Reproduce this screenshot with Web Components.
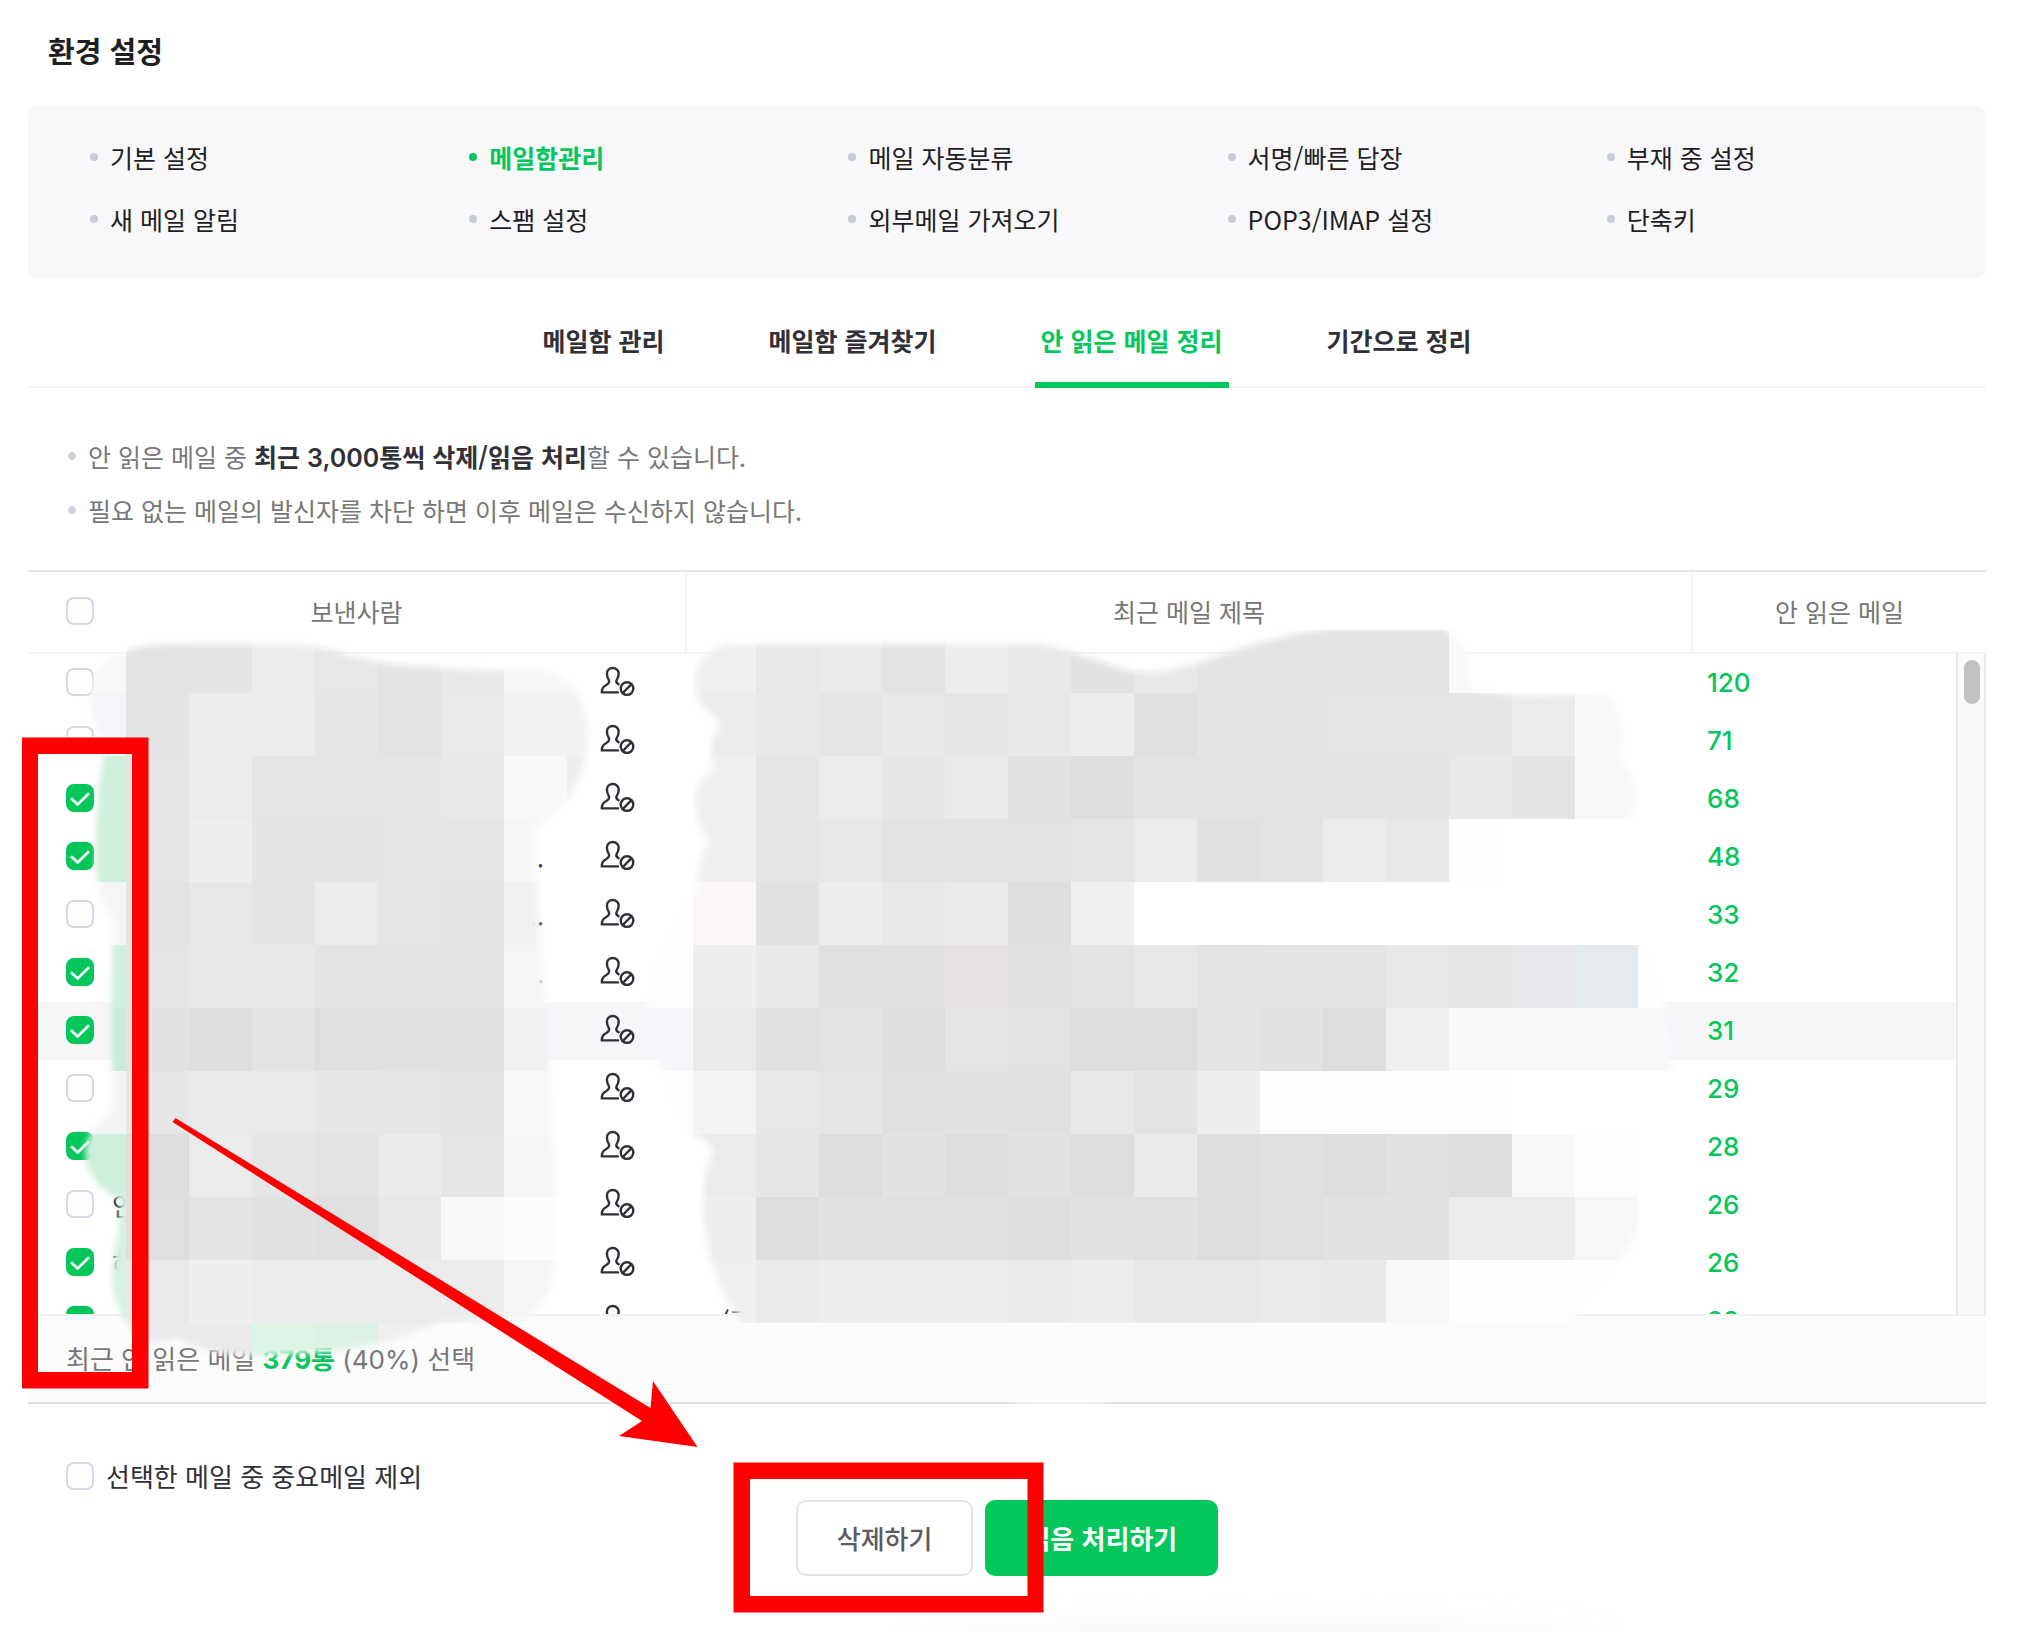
<!DOCTYPE html>
<html lang="ko">
<head>
<meta charset="utf-8">
<title>환경 설정</title>
<style>
  body { margin: 0; background: #fff; }
</style>
</head>
<body>
<settings-page></settings-page>
<script>
const define = (name, html, setup) => customElements.define(name, class extends HTMLElement {
  connectedCallback() {
    if (this.shadowRoot) return;
    const root = this.attachShadow({ mode: 'open' });
    const t = document.createElement('template');
    t.innerHTML = typeof html === 'function' ? html(this) : html;
    root.append(t.content.cloneNode(true));
    if (setup) setup(this, root);
  }
});

/* Tick box with an optional slotted label */
define('check-box', el => `
<style>
  :host { display: inline-flex; }
  label { display: flex; align-items: center; gap: 12px; line-height: 28px; }
  .box { display: grid; flex: none; }
  input, svg { grid-area: 1 / 1; width: 28px; height: 28px; margin: 0; box-sizing: border-box; }
  input { appearance: none; border: 2px solid #d3d6e8; border-radius: 8px; background: #fff; }
  input:checked { border-color: #03c75a; background: #03c75a; }
  svg { pointer-events: none; visibility: hidden; }
  input:checked + svg { visibility: visible; }
</style>
<label><span class="box"><input type="checkbox" ${el.hasAttribute('checked') ? 'checked' : ''} ${el.hasAttribute('name') ? `aria-label="${el.getAttribute('name')}"` : ''}>
<svg viewBox="0 0 28 28" fill="none" stroke="#fff" stroke-width="2.7"><path d="M5 14.2 11.7 20.4 23 9.200"/></svg></span><slot></slot></label>`);

/* Person with a "blocked" badge */
define('block-icon', `
<style>:host { display: block; width: 36px; height: 32px; } svg { display: block; }</style>
<svg width="36" height="32" viewBox="0 0 36 32" fill="none" stroke="#2f2f37" stroke-width="2.4" stroke-linecap="round" stroke-linejoin="round">
<path d="M18.6 18.2C16.4 17.2 15.9 16.2 16.5 14.4 17.8 12.4 18.7 10.4 18.7 7.8 18.7 4.4 16.2 2 12.8 2S6.9 4.4 6.9 7.8C6.9 10.4 7.8 12.4 9 14.4 9.7 17 8.3 18 5.6 19.5 2.8 21 1.7 22.8 1.8 26.4H18"/>
<circle cx="27" cy="22.6" r="6.3"/><path d="M22.8 27 31.2 18.3"/></svg>`);

define('settings-nav', `
<style>
  :host { display: block; font-size: 25px; }
  ul { list-style: none; margin: 0; padding: 20px 0 28px 62px; background: #f8f8fb; border-radius: 10px;
       display: grid; grid-template-columns: repeat(5, 1fr); }
  li, a { display: flex; align-items: center; }
  li { height: 62px; }
  a { gap: 12px; color: #1e1e23; text-decoration: none; white-space: nowrap; }
  a::before { content: ""; width: 8px; height: 8px; border-radius: 50%; background: #c8ccd6; }
  a[aria-current] { color: #03c75a; font-weight: 700; }
  a[aria-current]::before { background: #03c75a; }
</style>
<nav><ul></ul></nav>`, (el, root) => {
  const items = ['기본 설정', '메일함관리', '메일 자동분류', '서명/빠른 답장', '부재 중 설정',
    '새 메일 알림', '스팸 설정', '외부메일 가져오기', 'POP3/IMAP 설정', '단축키'];
  root.querySelector('ul').innerHTML = items.map((t, i) =>
    `<li><a href="#"${i === 1 ? ' aria-current="page"' : ''}>${t}</a></li>`).join('');
});

define('mailbox-tabs', `
<style>
  :host { display: block; font-size: 25px; }
  nav { display: flex; justify-content: center; gap: 92px; border-bottom: 2px solid #f4f4f6; }
  a { padding: 44px 6px 24px; margin-bottom: -2px; border-bottom: 6px solid transparent; line-height: 36px;
      font-weight: 700; color: #303038; text-decoration: none; }
  a[aria-current] { color: #03c75a; border-color: #03c75a; }
</style>
<nav><a href="#">메일함 관리</a><a href="#">메일함 즐겨찾기</a><a href="#" aria-current="page">안 읽은 메일 정리</a><a href="#">기간으로 정리</a></nav>`);

define('notice-list', `
<style>
  :host { display: block; padding: 41px 0 33px 40px; font-size: 25px; }
  ul { list-style: none; margin: 0; padding: 0; color: #777; }
  li { display: flex; align-items: center; gap: 12px; height: 54px; }
  li::before { content: ""; width: 8px; height: 8px; border-radius: 50%; background: #cfd3db; }
  strong { color: #303038; font-weight: 700; }
  .num { font-family: Inter, sans-serif; font-weight: 600; }
</style>
<ul><li><span>안 읽은 메일 중 <strong>최근 <span class="num">3,000</span>통씩 삭제/읽음 처리</strong>할 수 있습니다.</span></li>
<li><span>필요 없는 메일의 발신자를 차단 하면 이후 메일은 수신하지 않습니다.</span></li></ul>`);

define('unread-table', `
<style>
  :host { display: block; border-top: 2px solid #e4e4ea; border-bottom: 2px solid #e0e0e0; }
  table, thead, tbody { display: block; }
  tr { display: grid; grid-template-columns: 659px 1fr var(--count); }
  th, td { padding: 0; box-sizing: border-box; display: flex; align-items: center; min-width: 0; }
  thead { --count: 293px; border-bottom: 2px solid #f4f4f6; }
  th { height: 80px; justify-content: center; padding-bottom: 2px; font-size: 25px; font-weight: 400; color: #777; border-right: 2px solid #f4f4f6; }
  th:last-child { border: 0; }
  th:first-child { display: grid; grid-template-columns: 28px 1fr 28px; padding: 0 38px 2px; justify-items: center; }
  .view { display: grid; grid-template-columns: 1fr 30px; height: 660px; overflow: hidden; }
  tbody { --count: 263px; min-width: 0; }
  tbody tr { height: 58px; }
  tr.on { background: #f6f6f9; }
  .from { padding: 0 51px 2px 38px; gap: 18px; color: #303038; }
  .from .name { flex: 1; display: flex; justify-content: space-between; padding-right: 38px; }
  button { border: 0; padding: 0; background: none; }
  .title { padding: 0 34px 2px; color: #303038; }
  .count { padding: 0 0 2px 14px; font: 500 26px Inter, sans-serif; color: #03c75a; }
  .track { background: #fafafa; border: solid #e8e8ea; border-width: 0 2px; padding: 6px; }
  .thumb { width: 16px; height: 44px; border-radius: 8px; background: #c1c1c1; }
  .sum { display: flex; align-items: center; height: 88px; box-sizing: border-box; padding: 0 38px 4px;
         background: #fcfcfc; border-top: 2px solid #f2f2f4; color: #777; }
  .sum b { color: #03c75a; }
  .num { font-family: Inter, sans-serif; }
</style>
<table><thead><tr><th scope="col"><check-box name="전체 선택"></check-box><span>보낸사람</span></th><th scope="col">최근 메일 제목</th><th scope="col">안 읽은 메일</th></tr></thead></table>
<div class="view"><table><tbody></tbody></table><div class="track"><div class="thumb"></div></div></div>
<div class="sum"><span>최근 안 읽은 메일 <b><span class="num">379</span>통</b> <span class="num">(40%)</span> 선택</span></div>`, (el, root) => {
  const rows = [[120, 0], [71, 0], [68, 1], [48, 1, '', '.'], [33, 0, '', '..'], [32, 1, '', '.'], [31, 1], [29, 0, '', '.'],
    [28, 1, '', '', '('], [26, 0, '안', '', '['], [26, 1, '하', '', '('], [23, 1, '', '', '(광']];
  root.querySelector('tbody').innerHTML = rows.map(([n, on, a = '', b = '', t = '']) => `
    <tr${n === 31 ? ' class="on"' : ''}><td class="from"><check-box name="선택"${on ? ' checked' : ''}></check-box>
    <span class="name"><span>${a}</span><span>${b}</span></span>
    <button type="button" aria-label="수신차단"><block-icon></block-icon></button></td>
    <td class="title">${t}</td><td class="count">${n}</td></tr>`).join('');
});

/* Push button; "primary" gives the filled look */
define('push-button', `
<style>
  :host { display: block; }
  button { height: 76px; padding: 0 39px 2px; border: 2px solid #e4e4ea; border-radius: 10px; background: #fff;
           font: inherit; font-weight: 500; color: #5b5b63; }
  :host([primary]) button { background: #03c75a; border-color: #03c75a; color: #fff; font-weight: 700; }
</style>
<button type="button"><slot></slot></button>`);

/* Mosaic that hides names and titles, on a 63px grid */
const GRID = 63;
const GREEN = 'cdefdc', V = 'e2e2e5', D = 'dedee0', W = 'ffffff';
const LEFT = [
  ['f8', 'e3e3e5', 'e4', 'eb', 'e7', 'e4', 'e8', 'f6', 'f3'],
  ['f4f5f8', 'e4', 'ec', 'eb', 'e6', 'e3e3e6', 'e9', 'f2', 'f2'],
  [GREEN, 'e5', 'ec', 'e5', 'e5', 'e5', 'e8', 'f8', 'ee'],
  [GREEN, 'e5', 'ee', 'e4', 'e4', 'e5', 'e6', 'f6', 'f6'],
  ['f5', 'e3', 'e7', 'e4', 'eb', 'e5', 'e4', 'f1', 'f1'],
  [GREEN, 'e5', 'e8', 'e8', 'e4', 'e4', 'e4', 'f5', 'f5'],
  ['c9ebd8', 'e2', D, 'e4', 'dfdfe1', 'e1e1e3', 'e2e2e4', 'f1f1f4', 'f4f5f8'],
  ['f4', 'e6', 'e9', 'e9', 'e6', 'e6', 'e4', 'f8', 'f8'],
  [GREEN, D, 'eb', 'e6', 'e3', 'ea', 'e5', 'f6', 'f6'],
  ['d4f1e1', 'dfdfe1', 'e4', V, 'e0e0e3', 'e7', 'f8', 'fc', 'fc'],
  ['d4f1e1', 'e9', 'ee', 'eb', 'ec', 'eb', 'ec', 'f5', 'f5'],
  ['f2', 'ea', 'ea', 'dcf4e6', 'dcf1e5', 'ef', 'f3', 'f7', 'f7']
];
const RIGHT = [
  [W, 'f0', 'e7', 'e9', 'e3', 'ec', 'e8', V, 'e8', 'e4', 'e4', 'e4', 'e4', 'f9', W, W],
  [W, 'ec', 'e8', 'e5', 'e8', 'e5', 'e8', 'ed', 'e0', 'e4', 'e4', 'e5', 'e5', 'e6', 'eb', 'f8'],
  [W, 'f0', 'e5', 'eb', 'e6', 'e9', V, D, 'e3', 'e3', 'e3', 'e4', 'e4', 'e8', 'e3', 'f8', 'fa'],
  [W, 'f0', 'e5', 'e7', 'e3', 'e3', 'e3', 'e5', 'eb', 'e1', 'e3', 'eb', 'e7', 'fdfffe', W, W, W],
  ['fd', 'fbf7f6', V, 'ed', 'e8', 'ea', D, 'f0', W, W, W, W, W, W, W, W, W],
  ['fd', 'ee', 'e8', 'e0', V, 'e9e2e2', 'e1', 'e4', 'e7', 'e3', 'e4', 'e4', 'e7', 'e5', 'e7e7eb', 'e5eaee', 'fe'],
  ['f4f6f9', 'ea', 'e1', 'e3e3e5', D, 'e5e5e7', 'e3e3e5', 'dddddf', 'dddddf', 'e4', 'e2e2e4', 'dddddf', 'f0', 'f8f8fb', 'f8f8fb', 'f8f8fb', 'f8f8fb'],
  ['fd', 'f3', 'e7', 'e5', 'dfdfe1', 'e2', 'dfdfe1', 'e8', 'e3', 'ee', 'fdfffe', 'fdfffe', 'fdfffe', 'fdfffe', W, W, W],
  [W, 'eb', 'e6', 'dd', V, 'dd', V, 'dddde0', 'ea', 'dddde0', 'dfdfe1', 'dddde0', 'e0', D, 'f7', 'fd', W],
  [W, 'ee', 'dddde0', 'e1', 'e0', 'e1', D, V, 'e1', 'dddde0', 'dfdfe1', V, 'e1', 'ec', 'ec', 'f7', W],
  [W, 'ef', 'ea', 'ec', 'ed', 'ec', 'ea', 'ec', 'e7', 'e7', 'e9', 'e8', 'f7', 'fdfffd', 'fdfffd', 'fdfffd', W]
];
const cells = (grid, col) => grid.map((row, r) => row.map((c, i) =>
  `<rect x="${(col + i) * GRID}" y="${(10 + r) * GRID}" width="63" height="63" fill="#${c.length === 2 ? c + c + c : c}"/>`).join('')).join('');

define('mosaic-layer', () => `
<style>:host { position: absolute; inset: 0; pointer-events: none; overflow: hidden; } svg { display: block; }</style>
<svg width="2044" height="1632" viewBox="0 0 2044 1632" aria-hidden="true">
<defs>
<filter id="soft" x="-5%" y="-5%" width="110%" height="110%"><feGaussianBlur stdDeviation="3"/></filter>
<filter id="haze" x="-30%" y="-60%" width="160%" height="220%"><feGaussianBlur stdDeviation="14"/></filter>
<filter id="fade" x="-30%" y="-60%" width="160%" height="220%"><feGaussianBlur stdDeviation="5"/></filter>
<mask id="m1" maskUnits="userSpaceOnUse" x="0" y="600" width="640" height="800"><path filter="url(#soft)" fill="#fff" d="M110 657Q140 644 170 644H290Q325 646 350 656 390 666 430 667 470 670 500 670H540Q565 674 578 695 588 715 588 735 586 775 565 802 552 815 535 828L537 900 545 1000 550 1080 554 1160V1260Q551 1310 520 1321 480 1322 440 1323 415 1332 390 1341 330 1354 255 1356 205 1355 178 1338 160 1345 140 1338 112 1315 112 1270L118 1230 121 1200Q86 1185 85 1150 88 1128 112 1112V1000L113 920Q97 895 96 860 96 800 103 760 106 740 94 720 86 690 96 672Z"/></mask>
<mask id="m2" maskUnits="userSpaceOnUse" x="600" y="600" width="1100" height="800"><path filter="url(#soft)" fill="#fff" d="M730 644H1035Q1055 646 1070 652L1105 663Q1135 676 1170 670 1205 662 1235 650 1270 640 1300 633L1340 627H1438Q1462 634 1468 660L1470 690 1530 696 1605 693Q1622 715 1622 740L1618 756Q1636 775 1636 800L1628 822H1500V885L1638 940 1650 960Q1666 990 1672 1071L1645 1080 1640 1220Q1615 1290 1560 1326H745Q708 1280 704 1220 702 1170 714 1152 706 1136 690 1134 655 1060 645 1020 652 960 696 890 700 856 708 842 695 820 694 800 694 780 714 770 705 745 722 722 694 705 694 680 696 650 730 644Z"/></mask>
</defs>
<ellipse cx="1060" cy="1402" rx="50" ry="4" fill="#fff" filter="url(#fade)"/>
<ellipse cx="1260" cy="1650" rx="340" ry="26" fill="#f7f7f7" filter="url(#haze)"/>
<g mask="url(#m1)" shape-rendering="crispEdges">${cells(LEFT, 1)}</g>
<g mask="url(#m2)" shape-rendering="crispEdges">${cells(RIGHT, 10)}</g>
</svg>`);

/* Red frames and arrow that point at the steps */
define('markup-layer', `
<style>:host { position: absolute; inset: 0; pointer-events: none; overflow: hidden; } svg { display: block; }</style>
<svg width="2044" height="1632" viewBox="0 0 2044 1632" fill="red" aria-hidden="true">
<path fill-rule="evenodd" d="M22 737.500H148.500V1388.500H22ZM38 754V1372H132V754Z"/>
<path fill-rule="evenodd" d="M733.500 1462.500H1043.500V1612.500H733.500ZM750 1479V1596H1027.500V1479Z"/>
<path d="M175.500 1118 650.500 1408 653 1381 697.500 1447 619 1436 642 1421 172.500 1122Z"/>
</svg>`);

define('settings-page', `
<style>
  :host { display: block; position: relative; box-sizing: border-box; padding: 28px 58px 56px 28px;
          font: 400 26px "Noto Sans CJK KR", sans-serif; color: #303038; }
  h1 { margin: 0 20px 34px; font-size: 29px; line-height: 44px; font-weight: 700; color: #1e1e23; }
  .option { display: flex; padding: 58px 38px 10px; }
  .actions { display: flex; justify-content: center; gap: 12px; }
</style>
<main>
<h1>환경 설정</h1>
<settings-nav></settings-nav>
<mailbox-tabs></mailbox-tabs>
<notice-list></notice-list>
<unread-table></unread-table>
<div class="option"><check-box>선택한 메일 중 중요메일 제외</check-box></div>
<div class="actions"><push-button>삭제하기</push-button><push-button primary>읽음 처리하기</push-button></div>
</main>
<mosaic-layer></mosaic-layer>
<markup-layer></markup-layer>`);
</script>
</body>
</html>
